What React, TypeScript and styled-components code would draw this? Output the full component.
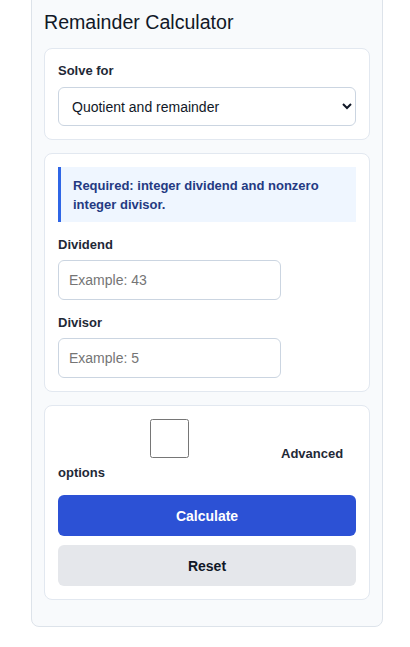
import React from "react";
import styled, { createGlobalStyle } from "styled-components";

const GlobalStyle = createGlobalStyle`
  html, body {
    margin: 0;
    padding: 0;
    background: #ffffff;
    font-family: "Liberation Sans", Arial, sans-serif;
    color: #1f2937;
  }
`;

const Panel = styled.div`
  box-sizing: border-box;
  width: 352px;
  margin: -12px 0 0 31px;
  padding: 12px 12px 13px;
  background: #f8fafc;
  border: 1px solid #dde3ea;
  border-radius: 8px;
`;

const Title = styled.h2`
  margin: 10px 0 14px;
  font-size: 19.6px;
  line-height: 23px;
  font-weight: 400;
  color: #111827;
`;

const Card = styled.section`
  box-sizing: border-box;
  margin-bottom: 13px;
  padding: 13px;
  background: #ffffff;
  border: 1px solid #e2e8f0;
  border-radius: 8px;
`;

const Field = styled.div`
  & + & {
    margin-top: 14px;
  }
`;

const Label = styled.label<{ $gap?: number }>`
  display: block;
  margin-bottom: ${(p) => p.$gap ?? 7}px;
  font-size: 13px;
  line-height: 17px;
  font-weight: 700;
  color: #1f2937;
`;

const Select = styled.select`
  box-sizing: border-box;
  width: 100%;
  height: 39px;
  padding: 0 9px;
  font-family: inherit;
  font-size: 14px;
  color: #111827;
  background: #ffffff;
  border: 1px solid #cbd5e1;
  border-radius: 6px;
`;

const Notice = styled.div`
  margin-bottom: 14px;
  padding: 9px 12px 8px;
  background: #eff6ff;
  border-left: 3px solid #2f66e6;
  font-size: 13px;
  line-height: 19px;
  font-weight: 700;
  color: #243a82;
`;

const TextInput = styled.input`
  box-sizing: border-box;
  width: 223px;
  height: 40px;
  padding: 0 10px;
  font-family: inherit;
  font-size: 14px;
  color: #111827;
  border: 1px solid #cbd5e1;
  border-radius: 6px;

  &::placeholder {
    color: #757575;
  }
`;

const CheckLabel = styled.label`
  display: block;
  margin-bottom: 13px;
  font-size: 13px;
  line-height: 19px;
  font-weight: 700;
  color: #1f2937;
`;

const CheckBox = styled.input`
  box-sizing: border-box;
  width: 223px;
  height: 39px;
  margin: 0;
  vertical-align: baseline;
`;

const Button = styled.button<{ $primary?: boolean }>`
  display: block;
  width: 100%;
  height: 41px;
  border: none;
  border-radius: 6px;
  font-family: inherit;
  font-size: 14px;
  font-weight: 700;
  cursor: pointer;
  background: ${(p) => (p.$primary ? "#2c51d5" : "#e5e7eb")};
  color: ${(p) => (p.$primary ? "#ffffff" : "#111827")};

  & + & {
    margin-top: 9px;
  }
`;

function App() {
  return (
    <>
      <GlobalStyle />
      <Panel>
        <Title>Remainder Calculator</Title>
        <Card>
          <Field>
            <Label htmlFor="solve-for" $gap={8}>
              Solve for
            </Label>
            <Select id="solve-for" defaultValue="qr">
              <option value="qr">Quotient and remainder</option>
              <option value="q">Quotient</option>
              <option value="r">Remainder</option>
            </Select>
          </Field>
        </Card>
        <Card>
          <Notice>Required: integer dividend and nonzero integer divisor.</Notice>
          <Field>
            <Label htmlFor="dividend">Dividend</Label>
            <TextInput id="dividend" type="text" placeholder="Example: 43" />
          </Field>
          <Field>
            <Label htmlFor="divisor">Divisor</Label>
            <TextInput id="divisor" type="text" placeholder="Example: 5" />
          </Field>
        </Card>
        <Card>
          <CheckLabel>
            <CheckBox type="checkbox" />Advanced options
          </CheckLabel>
          <Button $primary>Calculate</Button>
          <Button>Reset</Button>
        </Card>
      </Panel>
    </>
  );
}

export default App;
